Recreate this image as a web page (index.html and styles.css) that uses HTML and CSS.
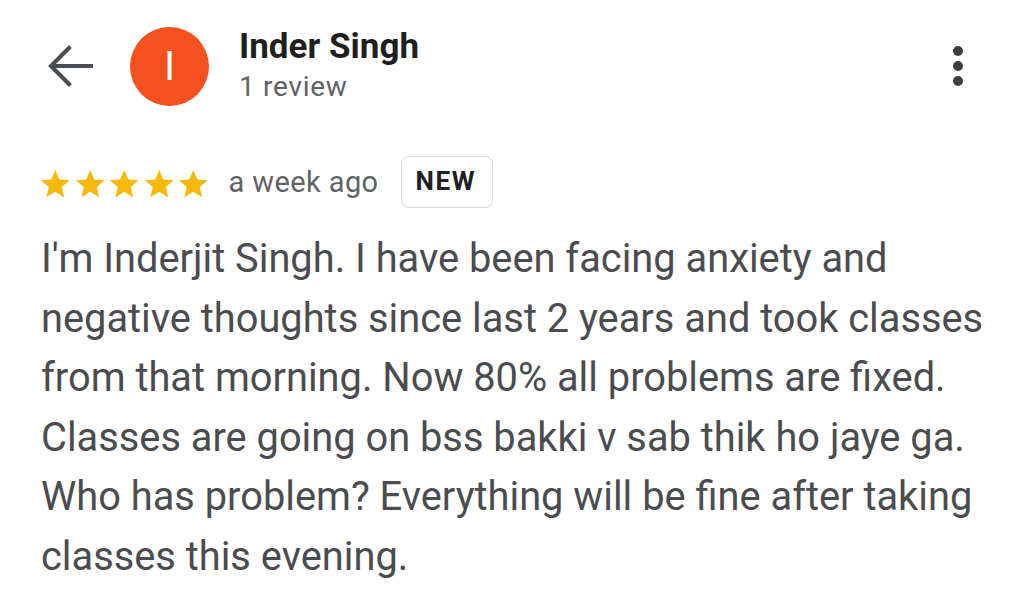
FILE: index.html
```html
<!DOCTYPE html>
<html>
<head>
<meta charset="utf-8">
<link rel="stylesheet" href="styles.css">
</head>
<body>
<div class="page">
  <header class="header">
    <svg class="back" viewBox="0 0 24 24"><path d="M20 12H4.6M11.2 4.8L4 12l7.2 7.2" fill="none" stroke="#4a4d51" stroke-width="1.65" stroke-linecap="square"/></svg>
    <div class="avatar">I</div>
    <div class="who">
      <div class="name">Inder Singh</div>
      <div class="count">1 review</div>
    </div>
    <div class="more"><span></span><span></span><span></span></div>
  </header>
  <div class="meta">
    <div class="stars">
      <svg viewBox="0 0 24 24"><path d="M12 17.27L18.18 21l-1.64-7.03L22 9.24l-7.19-.61L12 2 9.19 8.63 2 9.24l5.46 4.73L5.82 21z"/></svg>
      <svg viewBox="0 0 24 24"><path d="M12 17.27L18.18 21l-1.64-7.03L22 9.24l-7.19-.61L12 2 9.19 8.63 2 9.24l5.46 4.73L5.82 21z"/></svg>
      <svg viewBox="0 0 24 24"><path d="M12 17.27L18.18 21l-1.64-7.03L22 9.24l-7.19-.61L12 2 9.19 8.63 2 9.24l5.46 4.73L5.82 21z"/></svg>
      <svg viewBox="0 0 24 24"><path d="M12 17.27L18.18 21l-1.64-7.03L22 9.24l-7.19-.61L12 2 9.19 8.63 2 9.24l5.46 4.73L5.82 21z"/></svg>
      <svg viewBox="0 0 24 24"><path d="M12 17.27L18.18 21l-1.64-7.03L22 9.24l-7.19-.61L12 2 9.19 8.63 2 9.24l5.46 4.73L5.82 21z"/></svg>
    </div>
    <span class="when">a week ago</span>
    <span class="badge">NEW</span>
  </div>
  <p class="text">I'm Inderjit Singh. I have been facing anxiety and negative thoughts since last 2 years and took classes from that morning. Now 80% all problems are fixed. Classes are going on bss bakki v sab thik ho jaye ga. Who has problem? Everything will be fine after taking classes this evening.</p>
</div>
</body>
</html>
```
FILE: styles.css
```css
html, body {
  margin: 0;
  padding: 0;
  background: #ffffff;
}
body {
  font-family: Roboto, "Liberation Sans", sans-serif;
  width: 1024px;
  height: 603px;
  overflow: hidden;
}
.page {
  padding: 0 0 0 41px;
}
.header {
  display: flex;
  align-items: center;
  height: 132px;
}
.back {
  width: 60px;
  height: 60px;
  flex: none;
}
.avatar {
  width: 79px;
  height: 79px;
  border-radius: 50%;
  background: #f4511e;
  color: #ffffff;
  font-size: 41px;
  line-height: 1;
  display: flex;
  align-items: center;
  justify-content: center;
  margin-left: 29px;
  flex: none;
}
.who {
  margin-left: 30px;
  display: flex;
  flex-direction: column;
}
.name {
  font-size: 35px;
  font-weight: 700;
  color: #1f1f1f;
  line-height: 41px;
}
.count {
  font-size: 28px;
  letter-spacing: 0.7px;
  color: #5f6368;
  line-height: 40px;
}
.more {
  margin-left: auto;
  margin-right: 61px;
  display: flex;
  flex-direction: column;
  gap: 5px;
}
.more span {
  display: block;
  width: 10px;
  height: 10px;
  border-radius: 50%;
  background: #3c4043;
}
.meta {
  display: flex;
  align-items: center;
  height: 56px;
  margin-top: 22px;
}
.stars {
  display: flex;
  margin-left: -3px;
  margin-top: 4px;
}
.stars svg {
  width: 34.5px;
  height: 34.5px;
  fill: #f6b80b;
}
.when {
  font-size: 29px;
  letter-spacing: 0.4px;
  color: #5f6368;
  margin-left: 18px;
}
.badge {
  margin-left: 22px;
  border: 1.5px solid #d9d9d9;
  border-radius: 8px;
  padding: 0 16px 3px 14px;
  height: 47px;
  display: flex;
  align-items: center;
  font-size: 26px;
  font-weight: 700;
  letter-spacing: 1.6px;
  color: #202124;
}
.text {
  margin: 19px 24px 0 0;
  font-size: 39.8px;
  line-height: 59.6px;
  color: #4a4c4f;
}
```
